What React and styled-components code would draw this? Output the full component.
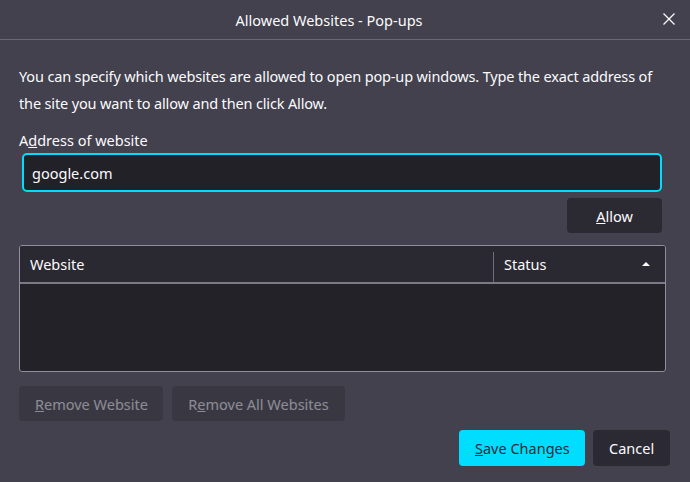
import React from "react";
import styled, { createGlobalStyle } from "styled-components";

const GlobalStyle = createGlobalStyle`
  html, body {
    margin: 0;
    padding: 0;
    background: #42414d;
  }
  body {
    font-family: "Noto Sans", "Open Sans", sans-serif;
    color: #fbfbfe;
  }
`;

const Dialog = styled.div`
  width: 690px;
  height: 482px;
  display: flex;
  flex-direction: column;
  background: #42414d;
  box-sizing: border-box;
`;

const TitleBar = styled.div`
  height: 39px;
  display: flex;
  align-items: center;
  justify-content: center;
  position: relative;
  padding-right: 32px;
  border-bottom: 1px solid #6a6976;
  font-size: 14.5px;
`;

const CloseButton = styled.div`
  position: absolute;
  right: 14px;
  top: 12px;
  width: 14px;
  height: 14px;
  display: flex;
`;

const Body = styled.div`
  flex: 1;
  display: flex;
  flex-direction: column;
  padding: 23px 24px 16px 19px;
`;

const Description = styled.p`
  margin: 0;
  font-size: 14.5px;
  line-height: 27px;
  letter-spacing: -0.15px;
`;

const Label = styled.label`
  margin-top: 12px;
  font-size: 14.5px;
  line-height: 22px;
`;

const AddressInput = styled.div`
  margin: 2px 4px 0 3px;
  height: 39px;
  box-sizing: border-box;
  border: 2px solid #00ddff;
  border-radius: 5px;
  background: #222128;
  display: flex;
  align-items: center;
  padding: 0 8px;
  font-size: 14.5px;
`;

const AllowRow = styled.div`
  display: flex;
  justify-content: flex-end;
  margin: 6px 4px 0 0;
`;

const Button = styled.button`
  font-family: inherit;
  font-size: 14.5px;
  height: 35px;
  border: none;
  border-radius: 4px;
  padding: 0 16px;
  width: ${(p) => p.$width}px;
  background: ${(p) => (p.$primary ? "#00ddff" : "#2b2a33")};
  color: ${(p) => (p.$primary ? "#2b2a33" : "#fbfbfe")};
  opacity: ${(p) => (p.disabled ? 0.4 : 1)};
  white-space: nowrap;
`;

const Table = styled.div`
  margin-top: 12px;
  height: 127px;
  box-sizing: border-box;
  border: 1px solid #8f8f9d;
  border-radius: 3px;
  background: #232229;
  display: flex;
  flex-direction: column;
  overflow: hidden;
`;

const HeaderRow = styled.div`
  height: 38px;
  box-sizing: border-box;
  display: flex;
  align-items: stretch;
  background: #2a2931;
  border-bottom: 2px solid #7a7985;
  font-size: 14.5px;
`;

const HeaderCell = styled.div`
  display: flex;
  align-items: center;
  box-sizing: border-box;
  padding: 0 10px;
  flex: ${(p) => p.$flex};
  border-left: ${(p) => (p.$divider ? "1px solid #6f6e7a" : "none")};
  margin: ${(p) => (p.$divider ? "6px 0 0" : "0")};
  padding-bottom: ${(p) => (p.$divider ? "6px" : "0")};
  justify-content: space-between;
`;

const SortArrow = styled.span`
  width: 0;
  height: 0;
  border-left: 4px solid transparent;
  border-right: 4px solid transparent;
  border-bottom: 4px solid #fbfbfe;
  margin-right: 5px;
`;

const RemoveRow = styled.div`
  display: flex;
  gap: 9px;
  margin-top: 14px;
`;

const Footer = styled.div`
  display: flex;
  justify-content: flex-end;
  gap: 8px;
  margin-top: 9px;
  margin-right: -4px;
`;

const FooterButton = styled(Button)`
  height: 36px;
`;

export default function App() {
  return (
    <>
      <GlobalStyle />
      <Dialog>
        <TitleBar>
          Allowed Websites - Pop-ups
          <CloseButton>
            <svg width="14" height="14" viewBox="0 0 14 14">
              <path d="M1.5 1.5 L12.5 12.5 M12.5 1.5 L1.5 12.5" stroke="#fbfbfe" strokeWidth="1.3" />
            </svg>
          </CloseButton>
        </TitleBar>
        <Body>
          <Description>
            You can specify which websites are allowed to open pop-up windows. Type the exact address of the site you want to allow and then click Allow.
          </Description>
          <Label>
            A<u>d</u>dress of website
          </Label>
          <AddressInput>google.com</AddressInput>
          <AllowRow>
            <Button $width={95}>
              <u>A</u>llow
            </Button>
          </AllowRow>
          <Table>
            <HeaderRow>
              <HeaderCell $flex={1}>Website</HeaderCell>
              <HeaderCell $flex="0 0 172px" $divider>
                Status
                <SortArrow />
              </HeaderCell>
            </HeaderRow>
          </Table>
          <RemoveRow>
            <Button disabled $width={144}>
              <u>R</u>emove Website
            </Button>
            <Button disabled $width={173}>
              R<u>e</u>move All Websites
            </Button>
          </RemoveRow>
          <Footer>
            <FooterButton $primary $width={126}>
              <u>S</u>ave Changes
            </FooterButton>
            <FooterButton $width={77}>Cancel</FooterButton>
          </Footer>
        </Body>
      </Dialog>
    </>
  );
}
